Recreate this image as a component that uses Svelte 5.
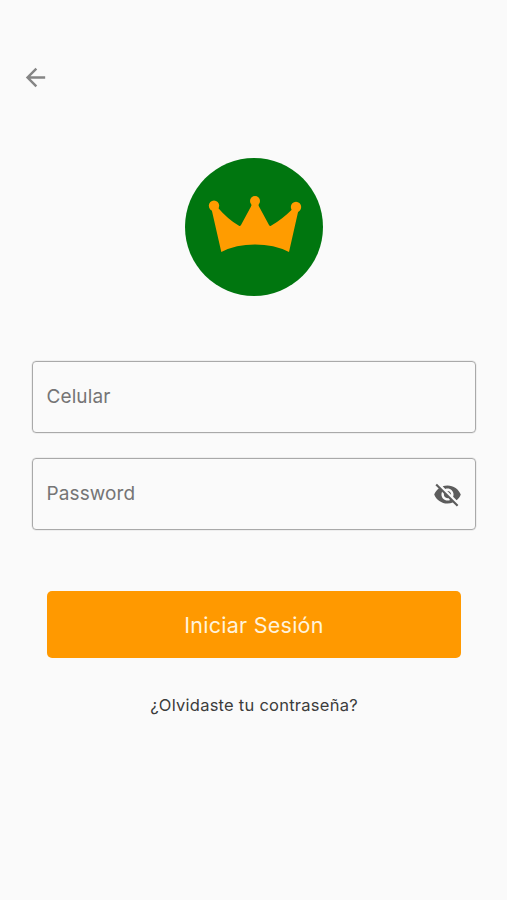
<script>
    let phone = $state("");
    let password = $state("");
    let visible = $state(false);
</script>

<main class="screen">
    <button class="icon back" aria-label="Volver">
        <svg viewBox="0 0 24 24">
            <path
                d="M20 11H7.83l5.59-5.59L12 4l-8 8 8 8 1.41-1.41L7.83 13H20v-2z"
            />
        </svg>
    </button>

    <svg class="logo" viewBox="0 0 138 138" aria-hidden="true">
        <circle class="disc" cx="69" cy="69" r="69" />
        <g class="crown">
            <path
                d="M26.5 51L36.3 93.9Q51 86.5 70 86.5T104 93.9L113.5 52L107.5 51Q97 61.5 86 67.8Q84.8 68.4 84 67L74 48.5Q73.4 47.4 73.4 46H66.6Q66.6 47.4 66 48.5L56 67Q55.2 68.4 54 67.8Q43 61.5 33.2 50Z"
            />
            <circle cx="29" cy="47.8" r="5.2" />
            <circle cx="70" cy="43" r="5" />
            <circle cx="111" cy="49" r="5.2" />
        </g>
    </svg>

    <form onsubmit={(e) => e.preventDefault()}>
        <div class="field">
            <input
                type="tel"
                placeholder="Celular"
                aria-label="Celular"
                bind:value={phone}
            />
        </div>
        <div class="field">
            <input
                type={visible ? "text" : "password"}
                placeholder="Password"
                aria-label="Password"
                bind:value={password}
            />
            <button
                type="button"
                class="icon eye"
                aria-label="Mostrar password"
                onclick={() => (visible = !visible)}
            >
                <svg viewBox="0 0 24 24">
                    {#if visible}
                        <path
                            d="M12 4.5C7 4.5 2.73 7.61 1 12c1.73 4.39 6 7.5 11 7.5s9.27-3.11 11-7.5c-1.73-4.39-6-7.5-11-7.5zM12 17c-2.76 0-5-2.24-5-5s2.24-5 5-5 5 2.24 5 5-2.24 5-5 5zm0-8c-1.66 0-3 1.34-3 3s1.34 3 3 3 3-1.34 3-3-1.34-3-3-3z"
                        />
                    {:else}
                        <path
                            d="M12 7c2.76 0 5 2.24 5 5 0 .65-.13 1.26-.36 1.83l2.92 2.92c1.51-1.26 2.7-2.89 3.43-4.75-1.73-4.39-6-7.5-11-7.5-1.4 0-2.74.25-3.98.7l2.16 2.16C10.74 7.13 11.35 7 12 7zM2 4.27l2.28 2.28.46.46C3.08 8.3 1.78 10.02 1 12c1.73 4.39 6 7.5 11 7.5 1.55 0 3.03-.3 4.38-.84l.42.42L19.73 22 21 20.73 3.27 3 2 4.27zM7.53 9.8l1.55 1.55c-.05.21-.08.43-.08.65 0 1.66 1.34 3 3 3 .22 0 .44-.03.65-.08l1.55 1.55c-.67.33-1.41.53-2.2.53-2.76 0-5-2.24-5-5 0-.79.2-1.53.53-2.2zm4.31-.78l3.15 3.15.02-.16c0-1.66-1.34-3-3-3l-.17.01z"
                        />
                    {/if}
                </svg>
            </button>
        </div>
        <button class="submit">Iniciar Sesión</button>
    </form>

    <button class="forgot">¿Olvidaste tu contraseña?</button>
</main>

<style>
    :global(body) {
        background: #fafafa;
    }

    .screen {
        box-sizing: border-box;
        min-height: 900px;
        padding: 63px 31px 0 32px;
        display: flex;
        flex-direction: column;
        align-items: center;
        font-family: Inter, "Liberation Sans", sans-serif;
    }

    button {
        padding: 0;
        border: 0;
        background: none;
        font: inherit;
        cursor: pointer;
    }

    .icon {
        width: 29px;
        height: 29px;
        flex: none;
        svg {
            display: block;
            width: 100%;
            height: 100%;
        }
    }
    .back {
        align-self: flex-start;
        margin-left: -11.5px;
        fill: #858585;
    }
    .eye {
        fill: #5c5c5c;
    }

    .logo {
        width: 138px;
        height: 138px;
        margin: 66px 0 65px;
    }
    .disc {
        fill: #00760f;
    }
    .crown {
        fill: #ff9c00;
    }

    form {
        width: 100%;
        display: flex;
        flex-direction: column;
        gap: 25px;
    }
    .field {
        box-sizing: border-box;
        height: 72px;
        padding: 0 13.5px;
        display: flex;
        align-items: center;
        border: 1px solid #a9a9a9;
        border-radius: 4px;
        box-shadow: 0 0 0 0.5px #e2e2e2;
    }
    input {
        flex: 1;
        min-width: 0;
        padding: 0 0 1px;
        border: 0;
        outline: none;
        background: none;
        color: #333;
        font: inherit;
        font-size: 19px;
        letter-spacing: 0.1px;
    }
    input::placeholder {
        color: #757575;
        opacity: 1;
    }

    .submit {
        height: 67px;
        margin: 36px 15px 0;
        border-radius: 5px;
        background: #ff9900;
        color: #fff3dc;
        font-size: 21.5px;
        letter-spacing: 0.25px;
    }
    .forgot {
        margin-top: 36px;
        color: #3c3c3c;
        font-size: 16.5px;
        letter-spacing: 0.25px;
        line-height: 22px;
    }
</style>
